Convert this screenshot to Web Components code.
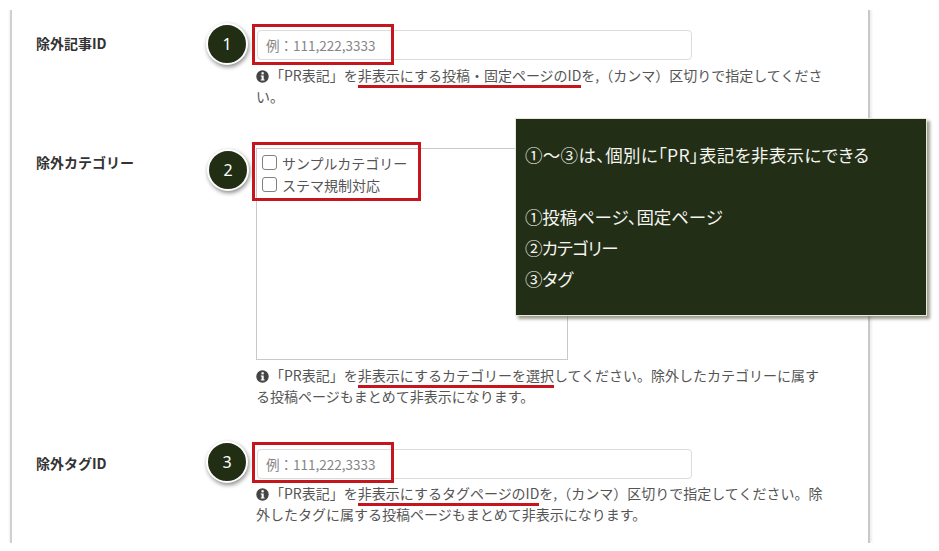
<!DOCTYPE html>
<html lang="ja"><head><meta charset="utf-8"><title>PR表記</title>
<style>
html,body{margin:0;background:#fff}
body{width:939px;height:551px;overflow:hidden;font-family:"Noto Sans CJK JP","Noto Sans",sans-serif;color:#555;font-size:14px}
</style></head><body>
<x-panel>
  <x-field label="除外記事ID" style="height:118px;--label-top:3px">
    <x-text-box>例：111,222,3333</x-text-box>
    <x-help>「PR表記」を<x-mark>非表示にする投稿・固定ページのID</x-mark>を,（カンマ）区切りで指定してください。</x-help>
    <x-badge slot="over" style="left:-50px;top:-7px">1</x-badge>
    <x-redbox slot="over" style="left:-4px;top:-6px;width:142px;height:41px"></x-redbox>
  </x-field>
  <x-field label="除外カテゴリー" style="height:301px">
    <x-listbox>
      <x-check>サンプルカテゴリー</x-check>
      <x-check>ステマ規制対応</x-check>
    </x-listbox>
    <x-help>「PR表記」を<x-mark>非表示にするカテゴリーを選択</x-mark>してください。除外したカテゴリーに属する投稿ページもまとめて非表示になります。</x-help>
    <x-badge slot="over" style="left:-49px;top:1px">2</x-badge>
    <x-redbox slot="over" style="left:-4px;top:-6px;width:169px;height:59px"></x-redbox>
  </x-field>
  <x-field label="除外タグID" style="--help-top:4px">
    <x-text-box>例：111,222,3333</x-text-box>
    <x-help>「PR表記」を<x-mark>非表示にするタグページのID</x-mark>を,（カンマ）区切りで指定してください。除外したタグに属する投稿ページもまとめて非表示になります。</x-help>
    <x-badge slot="over" style="left:-50px;top:-8px">3</x-badge>
    <x-redbox slot="over" style="left:-4px;top:-7px;width:142px;height:41px"></x-redbox>
  </x-field>
  <x-note slot="over">
    <p style="letter-spacing:.3px">①～③は、個別に「PR」表記を非表示にできる</p>
    <p>&nbsp;</p>
    <p style="letter-spacing:-.15px">①投稿ページ、固定ページ</p>
    <p style="letter-spacing:-.8px">②カテゴリー</p>
    <p style="letter-spacing:-.3px">③タグ</p>
  </x-note>
</x-panel>
<script>
function def(name,css,html){
  customElements.define(name,class extends HTMLElement{
    constructor(){super();const r=this.attachShadow({mode:'open'});r.innerHTML='<style>'+css+'</style>'+html;}
    connectedCallback(){const l=this.shadowRoot.querySelector('[data-label]');if(l)l.textContent=this.getAttribute('label')||'';}
  });
}
def('x-panel',`:host{display:block;position:relative;box-sizing:border-box;margin:10px 0 0 10px;width:860px;height:533px;border-left:2px solid #d0d0d0;border-right:2px solid #c8c8c8;padding-top:20px;box-shadow:2px 0 2px #eee,-1px 0 2px #f2f2f2;clip-path:inset(0 -100px 0 -100px)}`,
`<slot></slot><slot name="over"></slot>`);
def('x-field',`:host{display:grid;grid-template-columns:220px 436px;padding-left:24px}
.l{font:700 14px/21px "Noto Sans CJK JP",sans-serif;color:#333;padding-top:var(--label-top,4px)}
.c{position:relative;display:flex;flex-direction:column}`,
`<div class="l" data-label></div><div class="c"><slot></slot><slot name="over"></slot></div>`);
def('x-text-box',`:host{display:flex;align-items:center;box-sizing:border-box;height:30px;width:435px;margin-left:1px;border:1px solid #dcdcdc;border-radius:4px;padding-left:8px;background:#fff;font:13.5px "Noto Sans CJK JP",sans-serif;color:#858585}`,`<slot></slot>`);
def('x-listbox',`:host{display:block;box-sizing:border-box;width:312px;height:212px;border:1px solid #c9c9c9;padding:3px 5px;background:#fff}`,`<slot></slot>`);
def('x-check',`:host{display:flex;align-items:center;gap:5px;height:22px;font:14px "Noto Sans CJK JP",sans-serif;color:#555}
i{display:block;box-sizing:border-box;width:15px;height:15px;margin-top:-2px;border:1px solid #808080;border-radius:3px;background:#fff}`,`<i></i><slot></slot>`);
def('x-help',`:host{display:block;width:572px;margin-top:var(--help-top,5px);font:14px/21px "Noto Sans CJK JP",sans-serif;color:#555}
svg{width:13px;height:13px;vertical-align:-2px;margin-right:1px}`,
`<svg viewBox="0 0 13 13"><circle cx="6.5" cy="6.5" r="6.2" fill="#444"/><rect x="5.5" y="2.2" width="2.2" height="2.2" fill="#fff"/><path d="M4.7 5.4h3v4.1h.9v1.1H4.7V9.5h.9V6.5h-.9z" fill="#fff"/></svg><slot></slot>`);
def('x-mark',`:host{display:inline;position:relative}
u{position:absolute;left:0;right:0;bottom:-3px;height:3px;background:#c4161c;text-decoration:none}`,`<slot></slot><u></u>`);
def('x-badge',`:host{position:absolute;display:flex;align-items:center;justify-content:center;box-sizing:border-box;width:42px;height:42px;border-radius:50%;background:#222e14;border:2px solid #fff;box-shadow:1px 2px 4px rgba(0,0,0,.45);color:#fff;font:16px "Noto Sans",sans-serif}`,`<slot></slot>`);
def('x-redbox',`:host{position:absolute;box-sizing:border-box;border:3px solid #c4161c;pointer-events:none}`,``);
def('x-note',`:host{position:absolute;left:503px;top:108px;box-sizing:border-box;width:412px;height:198px;background:#232e16;box-shadow:3px 3px 3px rgba(90,90,70,.6);border:1px solid #e8e8d8;padding:20px 9px;color:#f4f4f0;font:17.5px/31px "Noto Sans CJK JP",sans-serif;font-feature-settings:"palt"}
::slotted(p){margin:0}`,`<slot></slot>`);
</script>
</body></html>
